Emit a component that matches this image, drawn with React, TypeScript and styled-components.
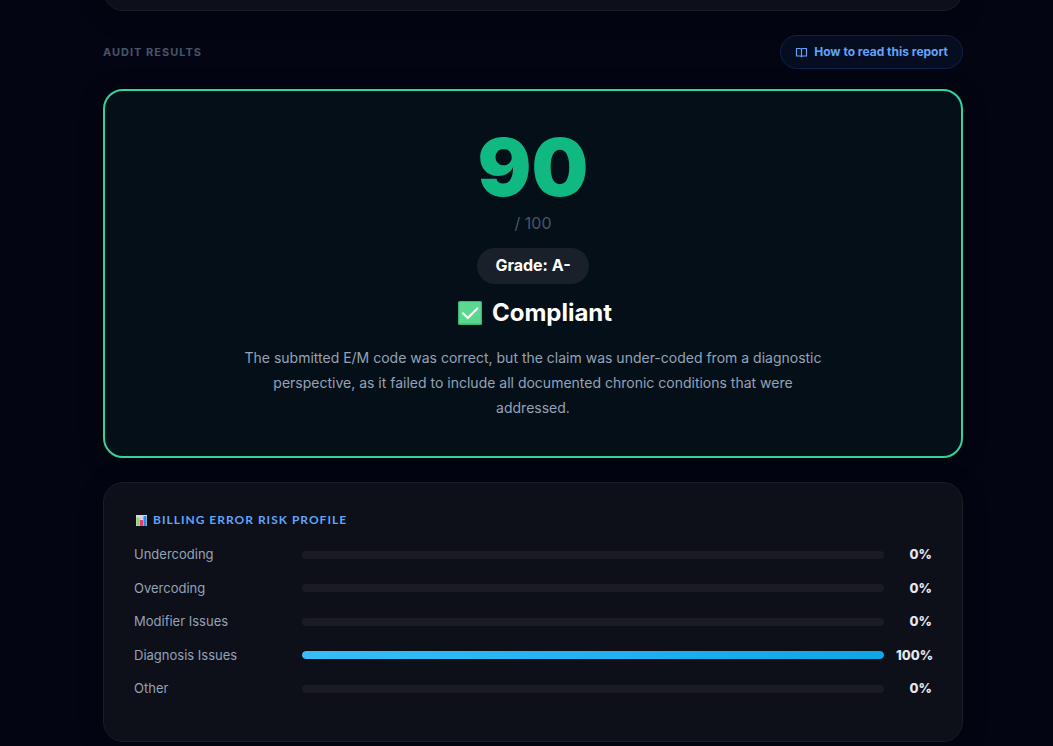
import React from "react";
import styled, { createGlobalStyle } from "styled-components";

const GlobalStyle = createGlobalStyle`
  *, *::before, *::after { box-sizing: border-box; }
  body {
    margin: 0;
    background: #030512;
    color: #ffffff;
    font-family: Inter, "Liberation Sans", sans-serif;
  }
`;

const Shell = styled.div`
  padding: 0 24px 4px 37px;
  overflow: hidden;
`;

const Page = styled.main`
  display: flex;
  flex-direction: column;
  width: 100%;
  max-width: 860px;
  margin: 0 auto;
`;

const Card = styled.section`
  background: #0d0f19;
  border: 1px solid #1b1c26;
  border-radius: 20px;
  padding: 30px;
  box-shadow: 0 4px 24px rgba(0, 0, 0, 0.3);
`;

const PreviousCard = styled(Card)`
  height: 60px;
  margin-top: -49px;
  padding: 0;
`;

const ResultsHeader = styled.header`
  display: flex;
  align-items: center;
  justify-content: space-between;
  margin: 24px 0 20px;
`;

const Eyebrow = styled.h2`
  margin: 0;
  font-size: 11px;
  line-height: 16px;
  font-weight: 700;
  letter-spacing: 1px;
  text-transform: uppercase;
  color: #475569;
`;

const HelpButton = styled.button`
  display: flex;
  align-items: center;
  gap: 6px;
  height: 34px;
  padding: 0 14px;
  border: 1px solid #0e2148;
  border-radius: 17px;
  background: #070d20;
  color: #60a5fa;
  font: 700 12px/20px Inter, "Liberation Sans", sans-serif;
  cursor: pointer;
`;

const ScoreCard = styled(Card)`
  display: flex;
  flex-direction: column;
  align-items: center;
  padding: 36px;
  background: #050f18;
  border: 2px solid #34d399;
  text-align: center;
`;

const Score = styled.div`
  font-size: 80px;
  line-height: 80px;
  font-weight: 900;
  color: #10b981;
`;

const ScoreTotal = styled.div`
  margin-top: 4px;
  font-size: 16px;
  line-height: 24px;
  color: #475569;
`;

const Grade = styled.div`
  margin-top: 13px;
  padding: 5px 18px 7px;
  border-radius: 18px;
  background: #192029;
  font-size: 16px;
  line-height: 24px;
  font-weight: 700;
`;

const Verdict = styled.h3`
  display: flex;
  align-items: center;
  gap: 10px;
  margin: 11px 0 0;
  font-size: 24px;
  line-height: 36px;
  font-weight: 700;
`;

const Summary = styled.p`
  max-width: 590px;
  margin: 14px 0 0;
  font-size: 14px;
  line-height: 25px;
  color: #94a3b8;
`;

const RiskCard = styled(Card)`
  margin-top: 24px;
`;

const RiskTitle = styled.h3`
  display: flex;
  align-items: center;
  gap: 6px;
  margin: 0 0 17px;
  font-family: Lato, Inter, sans-serif;
  font-size: 12px;
  line-height: 14px;
  font-weight: 700;
  letter-spacing: 1px;
  text-transform: uppercase;
  color: #60a5fa;
`;

const RiskList = styled.ul`
  display: flex;
  flex-direction: column;
  justify-content: space-between;
  min-height: 167px;
  margin: 0;
  padding: 0 0 12px;
  list-style: none;
`;

const RiskRow = styled.li`
  display: grid;
  grid-template-columns: 156px 1fr 36px;
  gap: 12px;
  align-items: center;
  font-size: 13px;
  line-height: 21px;
`;

const RiskLabel = styled.span`
  color: #94a3b8;
`;

const Track = styled.div`
  height: 8px;
  border-radius: 4px;
  background: #1a1b24;
  overflow: hidden;
`;

const Fill = styled.div`
  height: 100%;
  border-radius: 4px;
  background: linear-gradient(90deg, #38bdf8, #0ea5e9);
`;

const RiskValue = styled.span`
  font-weight: 800;
  text-align: right;
  color: #e2e8f0;
`;

const BookIcon = () => (
  <svg width="13" height="13" viewBox="0 0 13 13" fill="none" stroke="currentColor" strokeWidth="1.2" strokeLinejoin="round" aria-hidden="true">
    <path d="M1.5 2.5H5Q6.5 2.5 6.5 3.5Q6.5 2.5 8 2.5H11.5V10H8Q6.5 10 6.5 10.7Q6.5 10 5 10H1.5Z" />
    <path d="M6.5 3.5V10.5" />
  </svg>
);

const CheckIcon = () => (
  <svg width="28" height="24" viewBox="-4 0 28 24" aria-hidden="true">
    <rect width="24" height="24" rx="1.5" fill="#3fb575" />
    <rect x="1.2" y="1" width="21.6" height="21.6" rx="1" fill="#5bd88f" />
    <path d="M5 12.3L9.8 17L19.3 7.5" fill="none" stroke="#fff" strokeWidth="2.2" strokeLinecap="round" strokeLinejoin="round" />
  </svg>
);

const ChartIcon = () => (
  <svg width="13" height="11" viewBox="-2 0 13 11" aria-hidden="true">
    <rect width="11" height="11" fill="#d9d5e3" />
    <path d="M0 3.5H11M0 7H11" stroke="#bdb8cb" strokeWidth="0.5" />
    <rect x="0.5" y="2.5" width="3" height="8" fill="#86d965" />
    <rect x="4" y="5" width="3" height="6" fill="#e33f78" />
    <rect x="7.5" y="1" width="3" height="10" fill="#2f8de4" />
  </svg>
);

const risks = [
  { label: "Undercoding", value: 0 },
  { label: "Overcoding", value: 0 },
  { label: "Modifier Issues", value: 0 },
  { label: "Diagnosis Issues", value: 100 },
  { label: "Other", value: 0 },
];

export default function App() {
  return (
    <>
      <GlobalStyle />
      <Shell>
        <Page>
          <PreviousCard aria-hidden="true" />
          <ResultsHeader>
            <Eyebrow>Audit Results</Eyebrow>
            <HelpButton type="button">
              <BookIcon />
              How to read this report
            </HelpButton>
          </ResultsHeader>
          <ScoreCard>
            <Score>90</Score>
            <ScoreTotal>/ 100</ScoreTotal>
            <Grade>Grade: A-</Grade>
            <Verdict>
              <CheckIcon />
              Compliant
            </Verdict>
            <Summary>
              The submitted E/M code was correct, but the claim was under-coded from a diagnostic
              perspective, as it failed to include all documented chronic conditions that were
              addressed.
            </Summary>
          </ScoreCard>
          <RiskCard>
            <RiskTitle>
              <ChartIcon />
              Billing Error Risk Profile
            </RiskTitle>
            <RiskList>
              {risks.map((risk) => (
                <RiskRow key={risk.label}>
                  <RiskLabel>{risk.label}</RiskLabel>
                  <Track>
                    <Fill style={{ width: `${risk.value}%` }} />
                  </Track>
                  <RiskValue>{risk.value}%</RiskValue>
                </RiskRow>
              ))}
            </RiskList>
          </RiskCard>
        </Page>
      </Shell>
    </>
  );
}
